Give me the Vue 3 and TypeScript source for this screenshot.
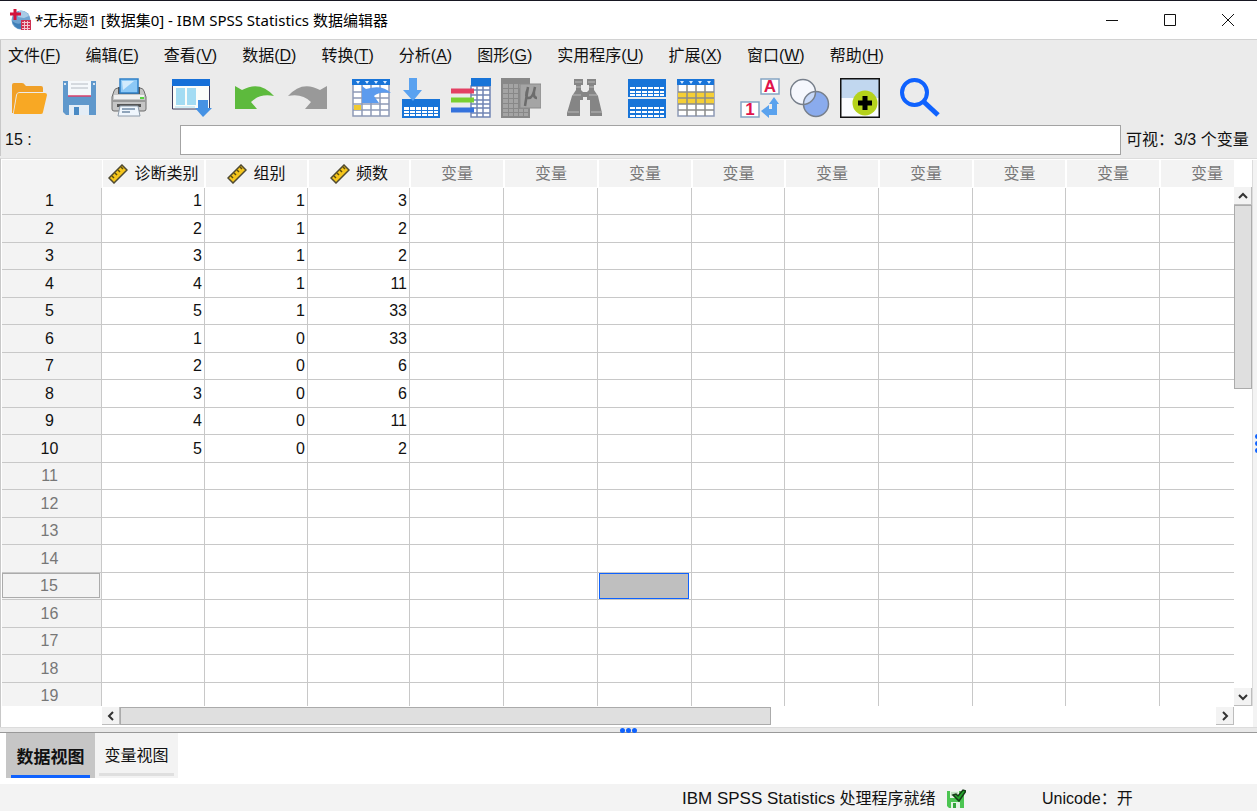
<script setup lang="ts">
import { ref } from 'vue'

interface MenuEntry {
  label: string
  key: string
}

const menus: MenuEntry[] = [
  { label: '文件', key: 'F' },
  { label: '编辑', key: 'E' },
  { label: '查看', key: 'V' },
  { label: '数据', key: 'D' },
  { label: '转换', key: 'T' },
  { label: '分析', key: 'A' },
  { label: '图形', key: 'G' },
  { label: '实用程序', key: 'U' },
  { label: '扩展', key: 'X' },
  { label: '窗口', key: 'W' },
  { label: '帮助', key: 'H' },
]

const variables: string[] = ['诊断类别', '组别', '频数']
const columnWidths: number[] = [103, 103, 102, 94, 94, 94, 93, 94, 94, 93, 94, 94]
const emptyColumns = columnWidths.length - variables.length

const cases: number[][] = [
  [1, 1, 3],
  [2, 1, 2],
  [3, 1, 2],
  [4, 1, 11],
  [5, 1, 33],
  [1, 0, 33],
  [2, 0, 6],
  [3, 0, 6],
  [4, 0, 11],
  [5, 0, 2],
]
const rowCount = 19

const selectedRow = ref(15)
const selectedColumn = ref(6)
const cellValue = ref('')

function valueAt(row: number, column: number): number | string {
  return cases[row - 1]?.[column - 1] ?? ''
}

function select(row: number, column: number): void {
  selectedRow.value = row
  selectedColumn.value = column
  cellValue.value = String(valueAt(row, column))
}
</script>

<template>
  <div class="window">
    <header class="titlebar">
      <svg class="app-icon" viewBox="0 0 22 22" aria-hidden="true">
        <circle cx="12" cy="11" r="9.500" fill="#6fa3d0" />
        <path d="M10 2a9 9 0 0 1 10 5l-5 2-6-1z" fill="#a9cbe6" />
        <path d="M3 12q5 4 9 2v6q-7-1-9-8z" fill="#3f7fb8" />
        <path d="M6 0v11M1 5h11" stroke="#d4143c" stroke-width="3" />
        <path d="M12 11h10v10H12z" fill="#cf3050" />
        <path d="M13 13.500h8M13 16.500h8M13 19.500h8M15.500 12v9M18.500 12v9" stroke="#f3c4ce" stroke-width="1" />
      </svg>
      <h1 class="title">*无标题1 [数据集0] - IBM SPSS Statistics 数据编辑器</h1>
      <div class="window-buttons">
        <button type="button" aria-label="最小化"><svg viewBox="0 0 14 14"><path d="M1 7.500h12" /></svg></button>
        <button type="button" aria-label="最大化"><svg viewBox="0 0 14 14"><path d="M1.500 1.500h11v11h-11z" /></svg></button>
        <button type="button" aria-label="关闭"><svg viewBox="0 0 14 14"><path d="M1 1l12 12M13 1L1 13" /></svg></button>
      </div>
    </header>

    <nav class="menubar">
      <button v-for="menu in menus" :key="menu.key" type="button">{{ menu.label }}(<u>{{ menu.key }}</u>)</button>
    </nav>

    <div class="toolbar" role="toolbar">
      <div class="group">
        <button type="button" aria-label="打开">
          <svg viewBox="0 0 40 40">
            <path d="M3 35V7q0-2 2-2h8q2 0 3 2l1 1h15q2 0 2 2v4H11q-3 0-4 3L4 35z" fill="#f0a028" />
            <path d="M10 15h26q2 0 2 2l-4 17q0 2-2 2H6q-2 0-1-2L8 17q0-2 2-2z" fill="#f8a824" />
          </svg>
        </button>
        <button type="button" aria-label="保存">
          <svg viewBox="0 0 40 40">
            <path d="M4 3h33v34H7l-3-3z" fill="#5f98cc" />
            <path d="M9 3h23v15H9z" fill="#f5f8fb" />
            <path d="M12 6h17M12 10h17" stroke="#b4bac2" stroke-width="1" />
            <path d="M9 18h23" stroke="#d8406c" stroke-width="1.500" />
            <path d="M10 27h20v10H10z" fill="#e4edf6" />
            <path d="M15 29h5v8h-5z" fill="#4a8ac4" />
            <path d="M5 5h2v2H5zM34 5h2v2h-2z" fill="#dbe7f2" />
          </svg>
        </button>
        <button type="button" aria-label="打印">
          <svg viewBox="0 0 40 40">
            <path d="M9 10q-3 0-4 3l-2 6v12q0 2 2 2h30q2 0 2-2V19l-2-6q-1-3-4-3z" fill="#c5c5c5" stroke="#6c6c6c" />
            <path d="M9 9v7h22V9" fill="#555" />
            <path d="M11 1h18v14H11z" fill="#8cc8f6" stroke="#2f80c8" stroke-width="1.500" />
            <path d="M13 3h12L14 12z" fill="#d2ebfd" />
            <path d="M5 17h30v4H5z" fill="#f0f0f0" /><path d="M3 23h34" stroke="#999" stroke-width="2" />
            <path d="M31 19h4v2h-4z" fill="#55d340" />
            <path d="M8 26h24v3H8z" fill="#555" />
            <path d="M11 28h18l2 10H9z" fill="#eff6fd" stroke="#8e9cab" />
            <path d="M13 31h13M13 34h8" stroke="#7089a4" stroke-width="1.500" />
          </svg>
        </button>
      </div>
      <div class="group">
        <button type="button" aria-label="调用最近使用的对话框">
          <svg viewBox="0 0 40 40">
            <path d="M.500 2h37v29H.500z" fill="#fbfdfa" stroke="#3b3b5c" />
            <path d="M0 1h38v7H0z" fill="#1670d8" />
            <path d="M4 10h9v17H4zM15 10h9v17h-9z" fill="#a3dcf3" />
            <path d="M3 29h20" stroke="#d3eef7" stroke-width="2" />
            <path d="M26 22h10v8h4l-9 9-8-9h3z" fill="#4692e4" />
          </svg>
        </button>
      </div>
      <div class="group history">
        <button type="button" aria-label="撤销">
          <svg viewBox="0 0 40 40">
            <path d="M0 8l7 4Q25 2 39 18 25 15 16 24l6 7H0z" fill="#5dba3d" />
          </svg>
        </button>
        <button type="button" aria-label="重做">
          <svg viewBox="0 0 40 40">
            <path d="M39 8l-7 4Q14 2 0 18q14-3 23 6l-6 7h22z" fill="#999" />
          </svg>
        </button>
      </div>
      <div class="group">
        <button type="button" aria-label="转到个案">
          <svg viewBox="0 0 40 40">
            <path d="M2 2h36v36H2z" fill="#fff" stroke="#8f9bb6" stroke-width="1.500" />
            <path d="M11 7v31M20 7v31M29 7v31M2 14h36M2 20h36M2 26h36M2 32h36" stroke="#8f9bb6" stroke-width="1.500" />
            <path d="M1 1h38v6H1z" fill="#1874d8" />
            <path d="M5 3h4L7 6zM14 3h4l-2 3zM23 3h4l-2 3zM32 3h4l-2 3z" fill="#d9ebff" />
            <path d="M3 27h7v5H3z" fill="#efc932" />
            <path d="M11 8l4 3q16-5 25 4-12-2-17 3l5 7H11z" fill="#5c9bee" />
          </svg>
        </button>
        <button type="button" aria-label="转到变量">
          <svg viewBox="0 0 40 40">
            <path d="M1 21h38v19H1z" fill="#1874d8" />
            <path d="M3 29h5v3H3zM9 29h5v3H9zM15 29h5v3h-5zM21 29h5v3h-5zM27 29h5v3h-5zM33 29h4v3h-4zM3 33h5v2H3zM9 33h5v2H9zM15 33h5v2h-5zM21 33h5v2h-5zM27 33h5v2h-5zM33 33h4v2h-4zM3 36h5v2H3zM9 36h5v2H9zM15 36h5v2h-5zM21 36h5v2h-5zM27 36h5v2h-5zM33 36h4v2h-4z" fill="#fff" />
            <path d="M8 0h8v12h5L12 23 2 12h6z" fill="#5aa2f0" />
          </svg>
        </button>
        <button type="button" aria-label="变量">
          <svg viewBox="0 0 40 40">
            <path d="M20 8h19v31H20z" fill="#fff" stroke="#7185b4" stroke-width="1.500" />
            <path d="M26 8v31M32 8v31M20 12h19M20 17h19M20 22h19M20 26h19M20 30h19M20 35h19" stroke="#7185b4" stroke-width="1.500" />
            <path d="M20 0h20v8H20z" fill="#1874d8" />
            <path d="M0 13h23" stroke="#e34063" stroke-width="5" />
            <path d="M0 22h23" stroke="#79cf31" stroke-width="5" />
            <path d="M0 32h23" stroke="#3572dc" stroke-width="5" />
          </svg>
        </button>
        <button type="button" aria-label="运行描述统计">
          <svg viewBox="0 0 40 40">
            <path d="M0 0h29v40H0z" fill="#888" />
            <path d="M2 6h5v4H2zM8 6h4v4H8zM13 6h4v4h-4zM18 6h4v4h-4zM2 11h5v4H2zM8 11h4v4H8zM13 11h4v4h-4zM2 16h5v4H2zM8 16h4v4H8zM13 16h4v4h-4zM2 21h5v4H2zM8 21h4v4H8zM13 21h4v4h-4zM2 26h5v4H2zM8 26h4v4H8zM13 26h4v4h-4zM2 31h5v3H2zM8 31h4v3H8zM13 31h4v3h-4zM18 31h4v3h-4zM23 31h4v3h-4zM2 35h5v3H2zM8 35h4v3H8zM13 35h4v3h-4zM18 35h4v3h-4zM23 35h4v3h-4z" fill="#a4a4a4" />
            <path d="M19 6h21v24H19z" fill="#a5a5a5" stroke="#8b8b8b" />
            <path d="M27 9l-3 19M27 10q-4 10 1 10 4 0 6-11-3 11 2 11" fill="none" stroke="#6c6c6c" stroke-width="2.500" />
          </svg>
        </button>
      </div>
      <div class="group">
        <button type="button" aria-label="查找">
          <svg viewBox="0 0 40 40">
            <path d="M10 1h9v6h-2v5l2 2h4l2-2V7h-2V1h9v6h-2v5l4 6 4 17v3H26V22h-3v-3h-4v3h-3v16H3v-3L8 18l4-6V7h-2z" fill="#858585" />
            <path d="M11 4h7M24 4h7M12 9h5M25 9h5M9 17h8M25 17h8M4 34h11M27 34h11" stroke="#a8a8a8" stroke-width="1.500" fill="none" />
          </svg>
        </button>
      </div>
      <div class="group">
        <button type="button" aria-label="拆分文件">
          <svg viewBox="0 0 40 40">
            <g fill="#1874d8"><path d="M1 1h38v18H1zM1 21h38v19H1z" /></g>
            <g stroke="#fff" stroke-width="2" stroke-dasharray="5 1">
              <path d="M3 10h34M3 14h34M3 17h34M3 30h34M3 34h34M3 38h34" />
            </g>
          </svg>
        </button>
        <button type="button" aria-label="个案加权">
          <svg viewBox="0 0 40 40">
            <path d="M1 2h36v36H1z" fill="#fff" stroke="#8f9bb6" stroke-width="1.500" />
            <path d="M1 14h36v12H1z" fill="#f5cf35" />
            <path d="M10 7v31M19 7v31M28 7v31M1 14h36M1 20h36M1 26h36M1 32h36" stroke="#8b8c8c" stroke-width="1.500" />
            <path d="M0 1h37v6H0z" fill="#1874d8" />
            <path d="M3 3h4L5 6zM12 3h4l-2 3zM21 3h4l-2 3zM30 3h4l-2 3z" fill="#d9ebff" />
          </svg>
        </button>
      </div>
      <div class="group">
        <button type="button" aria-label="值标签">
          <svg viewBox="0 0 40 40">
            <path d="M21 1h18v15H21zM1 24h18v15H1z" fill="#fff" stroke="#85a5c4" stroke-width="1.500" />
            <text x="30" y="14" class="glyph">A</text>
            <text x="10" y="37" class="glyph">1</text>
            <path d="M34 19l5 7h-2v11h-8v3l-8-7 8-6v4h3v-5h-3z" fill="#5aa2ee" />
          </svg>
        </button>
        <button type="button" aria-label="使用变量集">
          <svg viewBox="0 0 40 40">
            <circle cx="26" cy="26" r="12.500" fill="#8aabed" />
            <circle cx="13" cy="14" r="12.500" fill="#f5f7fd" />
            <path d="M25.500 13.500a12.500 12.500 0 0 0-12 13A12.500 12.500 0 0 0 25.500 13.500z" fill="#c7d8f8" />
            <g fill="none" stroke="#777f8b" stroke-width="1.500"><circle cx="26" cy="26" r="12.500" /><circle cx="13" cy="14" r="12.500" /></g>
          </svg>
        </button>
        <button type="button" aria-label="显示所有变量">
          <svg viewBox="0 0 40 40">
            <path d="M0 0h40v40H0z" fill="#fafcff" />
            <path d="M0 0h40v20H0z" fill="#c1d7ef" />
            <circle cx="25" cy="25" r="12.500" fill="#b5d21c" />
            <path d="M25 18v14M18 25h14" stroke="#000" stroke-width="5" />
            <path d="M.500.500h39v39H.500z" fill="none" stroke="#111" stroke-width="2" />
          </svg>
        </button>
      </div>
      <div class="group search">
        <button type="button" aria-label="搜索">
          <svg viewBox="0 0 40 40">
            <circle cx="14.500" cy="14.500" r="12.500" fill="none" stroke="#0f62fe" stroke-width="4" />
            <path d="M24 24l14 13" stroke="#0f62fe" stroke-width="5" />
          </svg>
        </button>
      </div>
    </div>

    <div class="editor">
      <label for="cell-editor">{{ selectedRow }} :</label>
      <input id="cell-editor" v-model="cellValue" type="text" />
      <span class="visible-count">可视：3/3 个变量</span>
    </div>

    <main class="workspace">
      <div class="sheet">
        <table>
          <colgroup>
            <col class="row-col" />
            <col v-for="(width, i) in columnWidths" :key="i" :style="{ width: width + 'px' }" />
          </colgroup>
          <thead>
            <tr>
              <td class="corner"></td>
              <th v-for="name in variables" :key="name" scope="col">
                <span class="variable">
                  <svg viewBox="0 0 20 20" aria-hidden="true">
                    <path d="M1 14L14 1l5 5L6 19z" fill="#f5c51b" stroke="#4f4a32" stroke-width="1.500" />
                    <path d="M4 12l2 2M7 9l2 2M10 6l2 2M13 3l2 2" stroke="#5c4c10" stroke-width="1.500" />
                  </svg>
                  {{ name }}
                </span>
              </th>
              <th v-for="n in emptyColumns" :key="n" scope="col" class="unused">变量</th>
            </tr>
          </thead>
          <tbody>
            <tr v-for="row in rowCount" :key="row">
              <th scope="row" :class="{ unused: row > cases.length, current: row === selectedRow }">
                <span>{{ row }}</span>
              </th>
              <td
                v-for="column in columnWidths.length"
                :key="column"
                :class="{ selected: row === selectedRow && column === selectedColumn }"
                @click="select(row, column)"
              >
                <span>{{ valueAt(row, column) }}</span>
              </td>
            </tr>
          </tbody>
        </table>
      </div>
      <div class="scroll vertical">
        <button type="button" aria-label="向上滚动"><svg viewBox="0 0 10 10"><path d="M1 7l4-4 4 4" /></svg></button>
        <div class="track"><div class="thumb"></div></div>
        <button type="button" aria-label="向下滚动"><svg viewBox="0 0 10 10"><path d="M1 3l4 4 4-4" /></svg></button>
      </div>
      <div class="scroll horizontal">
        <button type="button" aria-label="向左滚动"><svg viewBox="0 0 10 10"><path d="M7 1L3 5l4 4" /></svg></button>
        <div class="track"><div class="thumb"></div></div>
        <button type="button" aria-label="向右滚动"><svg viewBox="0 0 10 10"><path d="M3 1l4 4-4 4" /></svg></button>
      </div>
      <div class="side-splitter"><i></i><i></i><i></i></div>
    </main>

    <div class="splitter"><i></i><i></i><i></i></div>

    <div class="tabs" role="tablist">
      <button type="button" role="tab" aria-selected="true" class="active">数据视图</button>
      <button type="button" role="tab" aria-selected="false">变量视图</button>
    </div>

    <footer class="statusbar">
      <div class="processor">
        <span><span class="product">IBM SPSS Statistics</span> 处理程序就绪</span>
        <svg viewBox="0 0 20 20" aria-hidden="true">
          <path d="M1 2h17v17H3l-2-2z" fill="#4cc552" />
          <path d="M4 2h9v7H4z" fill="#e8f6e8" /><path d="M5 4h7M5 6h7" stroke="#9ac59b" />
          <path d="M5 13h9v6H5z" fill="#e3f4e3" /><path d="M7 14h3v5H7z" fill="#35a63c" />
          <path d="M7 6l3-1 2 2 5-6 3 1-7 10z" fill="#24a52b" stroke="#153d17" stroke-width="1.500" />
        </svg>
      </div>
      <span class="encoding">Unicode：开</span>
    </footer>
  </div>
</template>

<style>
html,
body,
#app {
  height: 100%;
}
body {
  margin: 0;
}
</style>

<style scoped>
.window {
  box-sizing: border-box;
  display: flex;
  flex-direction: column;
  height: 100%;
  border-top: 1px solid #171722;
  background: #ebebeb;
  color: #111;
  font: 16px/20px "Liberation Sans", "Noto Sans CJK SC", sans-serif;
  overflow: hidden;
}
button {
  padding: 0;
  border: 0;
  background: none;
  color: inherit;
  font: inherit;
}
svg {
  display: block;
}
.titlebar {
  display: flex;
  align-items: center;
  flex: none;
  height: 38px;
  padding-left: 9px;
  border-bottom: 1px solid #d2d2d2;
  background: #fff;
}
.app-icon {
  width: 22px;
  height: 22px;
}
.title {
  flex: 1;
  margin: 0 0 0 4px;
  color: #000;
  font: 400 15px/20px "Noto Sans", "Noto Sans CJK SC", sans-serif;
  white-space: nowrap;
}
.window-buttons {
  display: flex;
}
.window-buttons button {
  display: grid;
  place-items: center;
  width: 58px;
  height: 38px;
}
.window-buttons svg {
  width: 14px;
  height: 14px;
  fill: none;
  stroke: #111;
}
.menubar {
  display: flex;
  flex: none;
  gap: 25px;
  height: 32px;
  padding-left: 7px;
  border-left: 1px solid #c8c8c8;
  white-space: nowrap;
}
u {
  text-underline-offset: 2px;
}
.toolbar {
  display: flex;
  flex: none;
  height: 46px;
  padding: 3px 0 3px 8px;
  border-left: 1px solid #c8c8c8;
}
.toolbar button {
  height: 46px;
}
.group {
  display: flex;
  gap: 10px;
}
.group + .group {
  margin-left: 23px;
}
.group.history {
  gap: 13px;
}
.group + .search {
  margin-left: 20px;
}
.toolbar svg {
  width: 40px;
  height: 40px;
}
.glyph {
  fill: #e0144c;
  font: 700 17px "Liberation Sans", sans-serif;
  text-anchor: middle;
}
.editor {
  display: grid;
  grid-template-columns: 175px 1fr 129px;
  align-items: center;
  flex: none;
  height: 32px;
  padding: 0 7px 0 4px;
  border-left: 1px solid #c8c8c8;
}
.editor input {
  box-sizing: border-box;
  width: 100%;
  height: 30px;
  padding: 0 6px;
  border: 1px solid #a3a3a3;
  border-radius: 0;
  background: #fff;
  font: inherit;
}
.visible-count {
  padding-left: 5px;
  white-space: nowrap;
}
.workspace {
  display: grid;
  grid-template-columns: minmax(0, 1fr) 19px 4px;
  grid-template-rows: minmax(0, 1fr) 21px;
  flex: 1;
  min-height: 0;
  margin-top: 2px;
  padding: 1px 0 0 1px;
  border-top: 1px solid #dcdcdc;
  border-left: 1px solid #c8c8c8;
  background: #fff;
}
.sheet {
  overflow: hidden;
}
table {
  width: 1250px;
  table-layout: fixed;
  border-collapse: separate;
  border-spacing: 0;
}
.row-col {
  width: 100px;
}
th,
td {
  box-sizing: border-box;
  height: 27px;
  padding: 0;
  border: 0 solid #c8c8c8;
  border-width: 0 1px 1px 0;
  font-weight: 400;
  line-height: 20px;
}
tr:nth-child(even) > * {
  height: 28px;
}
thead th,
.corner {
  height: 28px;
  background: #f3f3f3;
}
thead th {
  border-width: 0 1px 1px;
  border-color: #fff;
}
.corner {
  border-color: #f3f3f3;
}
.variable {
  display: flex;
  align-items: center;
  justify-content: center;
  gap: 6px;
}
.variable svg {
  width: 20px;
  height: 20px;
}
tbody th {
  padding-right: 4px;
  background: #f3f3f3;
}
th.unused {
  color: #777;
}
tbody td {
  padding-right: 2px;
  text-align: right;
}
tbody th.current {
  padding: 0 1px 1px 0;
}
.current span {
  display: block;
  box-sizing: border-box;
  height: 25px;
  padding: 2px 4px 0 0;
  border: 1px solid #ababab;
}
tbody td.selected {
  padding: 0 2px 0 1px;
}
.selected span {
  display: block;
  box-sizing: border-box;
  height: 26px;
  border: 1px solid #0f62fe;
  background: #bfbfbf;
}
.scroll {
  display: flex;
}
.scroll button {
  display: grid;
  place-items: center;
  flex: none;
  box-sizing: border-box;
  width: 18px;
  height: 18px;
  border: 0 solid #bdbdbd;
  border-width: 0 1px 1px 0;
  background: #f3f3f3;
}
.scroll svg {
  width: 10px;
  height: 10px;
  fill: none;
  stroke: #333;
  stroke-width: 2;
}
.vertical {
  flex-direction: column;
  padding-top: 27px;
  border-right: 1px solid #dcdcdc;
}
.horizontal {
  grid-column: 1;
  grid-row: 2;
  padding: 1px 0 2px 100px;
}
.track {
  flex: 1;
}
.thumb {
  box-sizing: border-box;
  border: 1px solid #ababab;
  background: #dfdfdf;
}
.vertical .thumb {
  width: 18px;
  height: 38%;
}
.horizontal .thumb {
  width: 59.4%;
  height: 18px;
}
.side-splitter {
  grid-column: 3;
  grid-row: 1 / 3;
  display: flex;
  flex-direction: column;
  justify-content: center;
  gap: 2px;
  padding-left: 2px;
  overflow: hidden;
  background: #f3f3f3;
}
.splitter {
  display: flex;
  align-items: center;
  justify-content: center;
  flex: none;
  gap: 1px;
  height: 4px;
  border-top: 1px solid #dcdcdc;
  border-bottom: 1px solid #999;
  background: #e9e9e9;
}
.splitter i,
.side-splitter i {
  flex: none;
  width: 5px;
  height: 5px;
  border-radius: 50%;
  background: #0f62fe;
}
.tabs {
  display: flex;
  align-items: flex-start;
  flex: none;
  height: 51px;
  padding-left: 6px;
  background: #fff;
}
.tabs button {
  display: flex;
  flex-direction: column;
  align-items: center;
  width: 83px;
  height: 45px;
  padding-top: 13px;
  background: #f3f3f3;
}
.tabs button::after {
  width: 75px;
  height: 3px;
  margin-top: 7px;
  background: #dfdfdf;
  content: "";
}
.tabs .active {
  width: 89px;
  padding-top: 15px;
  background: #c6c6c6;
  font-size: 17px;
  font-weight: 700;
}
.tabs .active::after {
  width: 79px;
  background: #0f62fe;
}
.statusbar {
  display: grid;
  grid-template-columns: 1fr 360px 215px;
  align-items: center;
  flex: none;
  box-sizing: border-box;
  height: 27px;
  padding-top: 2px;
  background: #f3f3f3;
}
.processor {
  grid-column: 2;
  display: flex;
  align-items: center;
  gap: 10px;
  white-space: nowrap;
}
.product {
  font-size: 17px;
}
.processor svg {
  width: 20px;
  height: 20px;
}
</style>
